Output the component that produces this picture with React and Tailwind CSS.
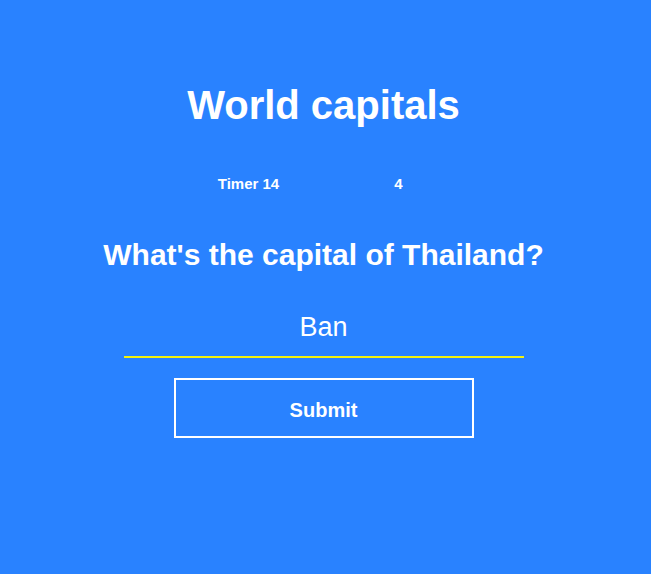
import { useState } from "react";

export default function App() {
  const [answer, setAnswer] = useState("Ban");

  return (
    <div className="min-h-screen w-full bg-[#2982ff] text-white font-['Liberation_Sans',Arial,sans-serif]">
      {/* Quiz column */}
      <div className="mr-[4px] flex flex-col items-center pt-[82px]">
        <h1 className="text-[40px] leading-[46px] font-bold">World capitals</h1>

        {/* Timer / score */}
        <div className="mt-[47px] grid w-[300px] grid-cols-2 text-center text-[15px] leading-[18px] font-bold">
          <span>Timer 14</span>
          <span>4</span>
        </div>

        <h2 className="mt-[44px] text-[30px] leading-[36px] font-bold">
          What's the capital of Thailand?
        </h2>

        <input
          autoFocus
          value={answer}
          onChange={(e) => setAnswer(e.target.value)}
          className="mt-[25px] h-[60px] w-[400px] border-0 border-b-2 border-[#f2f20d] bg-transparent p-0 text-center text-[27px] text-white caret-white outline-none"
        />

        <button className="mt-[20px] h-[60px] w-[300px] border-2 border-white pt-[3px] text-[20px] font-bold">
          Submit
        </button>
      </div>
    </div>
  );
}
